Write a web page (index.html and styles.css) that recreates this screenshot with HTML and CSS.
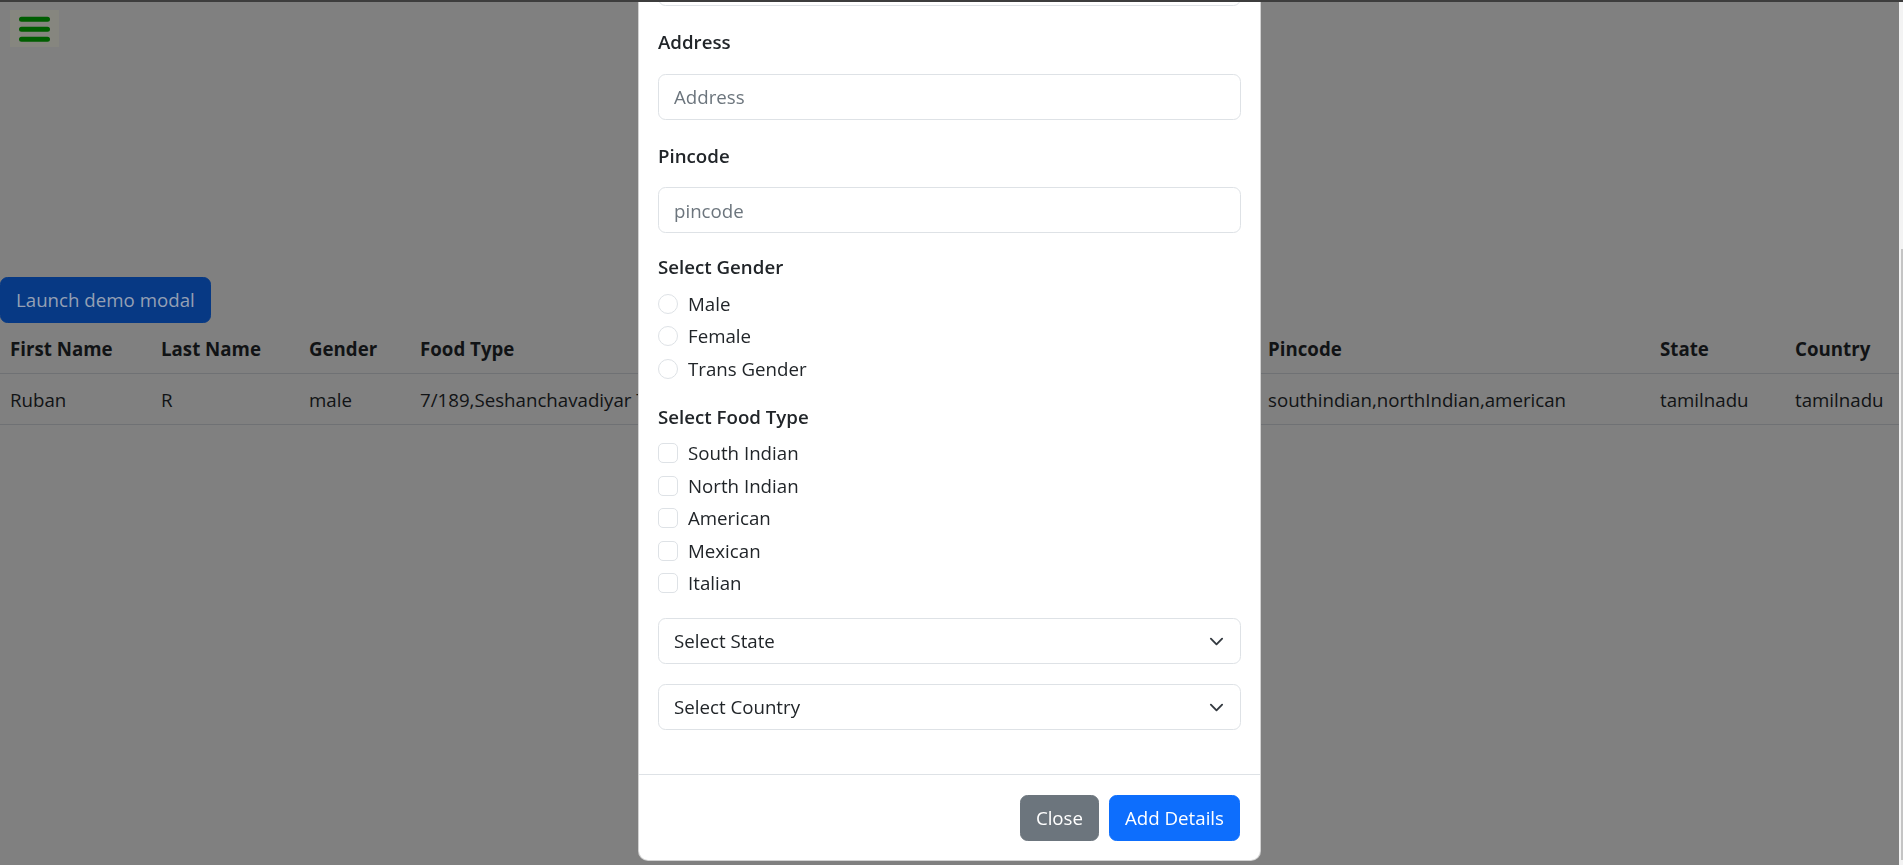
FILE: index.html
```html
<!DOCTYPE html>
<html lang="en">
  <head>
    <meta charset="UTF-8">
    <meta name="viewport" content="width=device-width, initial-scale=1.0">
    <title>User Details</title>
    <link rel="stylesheet" href="styles.css">
  </head>
  <body>
    <div class="topbar">
      <button class="menu-button">
        <svg width="49" height="37" viewBox="0 0 49 37">
          <path d="M11.5 9.3h26M11.5 19.3h26M11.5 29.3h26" stroke="#005e00" stroke-width="5" stroke-linecap="round" fill="none"/>
        </svg>
      </button>
    </div>

    <button class="launch-button">Launch demo modal</button>

    <table class="details-table">
      <colgroup>
        <col style="width: 151px">
        <col style="width: 148px">
        <col style="width: 111px">
        <col style="width: 424px">
        <col style="width: 424px">
        <col style="width: 392px">
        <col style="width: 135px">
        <col style="width: 114px">
      </colgroup>
      <thead>
        <tr>
          <th>First Name</th>
          <th>Last Name</th>
          <th>Gender</th>
          <th>Food Type</th>
          <th>Address</th>
          <th>Pincode</th>
          <th>State</th>
          <th>Country</th>
        </tr>
      </thead>
      <tbody>
        <tr>
          <td>Ruban</td>
          <td>R</td>
          <td>male</td>
          <td>7/189,Seshanchavadiyar Tamil Street</td>
          <td>613001</td>
          <td>southindian,northIndian,american</td>
          <td>tamilnadu</td>
          <td>tamilnadu</td>
        </tr>
      </tbody>
    </table>

    <!-- modal is open and scrolled down to the footer -->
    <div class="modal">
      <div class="modal-dialog">
        <div class="modal-content">
          <div class="modal-header">
            <p class="modal-title">Add User Details</p>
            <button class="btn-close">&times;</button>
          </div>

          <div class="modal-body">
            <div class="field">
              <label class="form-label">First Name</label>
              <input class="form-control" placeholder="First Name">
            </div>
            <div class="field">
              <label class="form-label">Last Name</label>
              <input class="form-control" placeholder="Last Name">
            </div>
            <div class="field">
              <label class="form-label">Address</label>
              <input class="form-control" placeholder="Address">
            </div>
            <div class="field field-tight">
              <label class="form-label">Pincode</label>
              <input class="form-control" placeholder="pincode">
            </div>

            <div class="check-group">
              <label class="group-label">Select Gender</label>
              <div class="form-check"><input type="radio" name="gender" class="check-input radio"><label>Male</label></div>
              <div class="form-check"><input type="radio" name="gender" class="check-input radio"><label>Female</label></div>
              <div class="form-check"><input type="radio" name="gender" class="check-input radio"><label>Trans Gender</label></div>
            </div>

            <div class="check-group food-group">
              <label class="group-label">Select Food Type</label>
              <div class="form-check"><input type="checkbox" class="check-input"><label>South Indian</label></div>
              <div class="form-check"><input type="checkbox" class="check-input"><label>North Indian</label></div>
              <div class="form-check"><input type="checkbox" class="check-input"><label>American</label></div>
              <div class="form-check"><input type="checkbox" class="check-input"><label>Mexican</label></div>
              <div class="form-check"><input type="checkbox" class="check-input"><label>Italian</label></div>
            </div>

            <div class="select-wrap">
              <select class="form-select">
                <option>Select State</option>
                <option>tamilnadu</option>
                <option>kerala</option>
              </select>
              <svg width="15" height="15" viewBox="0 0 16 16"><path d="m2 5 6 6 6-6" fill="none" stroke="#343a40" stroke-width="2" stroke-linecap="round" stroke-linejoin="round"/></svg>
            </div>

            <div class="select-wrap select-last">
              <select class="form-select">
                <option>Select Country</option>
                <option>india</option>
              </select>
              <svg width="15" height="15" viewBox="0 0 16 16"><path d="m2 5 6 6 6-6" fill="none" stroke="#343a40" stroke-width="2" stroke-linecap="round" stroke-linejoin="round"/></svg>
            </div>
          </div>

          <div class="modal-footer">
            <button class="btn btn-secondary">Close</button>
            <button class="btn btn-primary">Add Details</button>
          </div>
        </div>
      </div>
    </div>

    <div class="scroll-track"><div class="scroll-thumb"></div></div>
    <div class="top-line"></div>
  </body>
</html>
```

FILE: styles.css
```css
body{
    margin: 0;
    background-color: #808080;
    font-family: "Open Sans", Arial, sans-serif;
    font-size: 18.7px;
    line-height: 30px;
    color: #111315;
}

.topbar{
    height: 277px;
    padding: 10px;
    box-sizing: border-box;
}

.menu-button{
    display: block;
    width: 49px;
    height: 37px;
    padding: 0;
    border: none;
    background-color: #86867f;
}

.menu-button svg{
    display: block;
}

.launch-button{
    display: block;
    height: 46px;
    padding: 7px 15px;
    border: 1px solid #073984;
    border-radius: 7.5px;
    background-color: #073984;
    color: #95a0b4;
    font: inherit;
}

.details-table{
    width: 1899px;
    border-collapse: collapse;
    table-layout: fixed;
}

.details-table th,
.details-table td{
    padding: 11px 10px 9px;
    text-align: left;
    border-bottom: 1px solid #6f7174;
    white-space: nowrap;
    overflow: hidden;
}

.details-table th{
    font-weight: 700;
}

/* modal */

.modal{
    position: fixed;
    top: 0;
    left: 0;
    right: 4px;
    bottom: 0;
    display: flex;
    flex-direction: column;
    justify-content: flex-end;
    overflow: hidden;
    padding-bottom: 4.5px;
    box-sizing: border-box;
}

.modal-dialog{
    width: 623px;
    margin: 0 auto;
    flex-shrink: 0;
}

.modal-content{
    background-color: white;
    border: 1px solid rgba(0, 0, 0, 0.175);
    border-radius: 10px;
    color: #212529;
}

.modal-header{
    display: flex;
    justify-content: space-between;
    align-items: center;
    padding: 20px 19px;
    border-bottom: 1px solid #dee2e6;
}

.modal-title{
    margin: 0;
    font-size: 24px;
    font-weight: 500;
}

.btn-close{
    border: none;
    background: transparent;
    font-size: 28px;
    color: #6c757d;
}

.modal-body{
    padding: 20px 19px;
}

.field{
    margin-bottom: 21px;
}

.field-tight{
    margin-bottom: 19px;
}

.form-label{
    display: block;
    margin-bottom: 16.5px;
    font-weight: 600;
}

.form-control,
.form-select{
    display: block;
    width: 100%;
    height: 46px;
    box-sizing: border-box;
    padding: 7px 15px;
    border: 1px solid #dee2e6;
    border-radius: 7.5px;
    background-color: white;
    color: #212529;
    font: inherit;
    appearance: none;
    outline: none;
}

.form-control::placeholder{
    color: #6c757d;
}

.check-group{
    margin-bottom: 18px;
}

.food-group{
    margin-bottom: 20px;
}

.group-label{
    display: block;
    margin-bottom: 6.5px;
    font-weight: 600;
}

.form-check{
    display: flex;
    align-items: center;
    gap: 10px;
    height: 30px;
    margin-bottom: 2.5px;
}

.check-input{
    width: 20px;
    height: 20px;
    margin: 0;
    border: 1px solid #dee2e6;
    border-radius: 5px;
    background-color: white;
    appearance: none;
}

.check-input.radio{
    border-radius: 50%;
}

.select-wrap{
    position: relative;
    margin-bottom: 20px;
}

.select-last{
    margin-bottom: 23.5px;
}

.select-wrap svg{
    position: absolute;
    right: 17px;
    top: 15.5px;
    pointer-events: none;
}

.modal-footer{
    display: flex;
    justify-content: flex-end;
    padding: 15px 15px 14px;
    border-top: 1px solid #dee2e6;
}

.btn{
    height: 46px;
    margin: 5px;
    padding: 7px 15px;
    border: 1px solid transparent;
    border-radius: 7.5px;
    color: white;
    font: inherit;
}

.btn-secondary{
    background-color: #6c757d;
    border-color: #6c757d;
}

.btn-primary{
    background-color: #0d6efd;
    border-color: #0d6efd;
}

/* modal scrollbar and window edge */

.scroll-track{
    position: fixed;
    top: 0;
    right: 0;
    width: 4px;
    height: 100%;
    background-color: #f3f3f3;
}

.scroll-thumb{
    margin-top: 249px;
    margin-left: 1.5px;
    height: 611px;
    background-color: #c4c4c4;
}

.top-line{
    position: fixed;
    top: 0;
    left: 0;
    right: 0;
    height: 2px;
    background-color: #3d3d3d;
}
```
